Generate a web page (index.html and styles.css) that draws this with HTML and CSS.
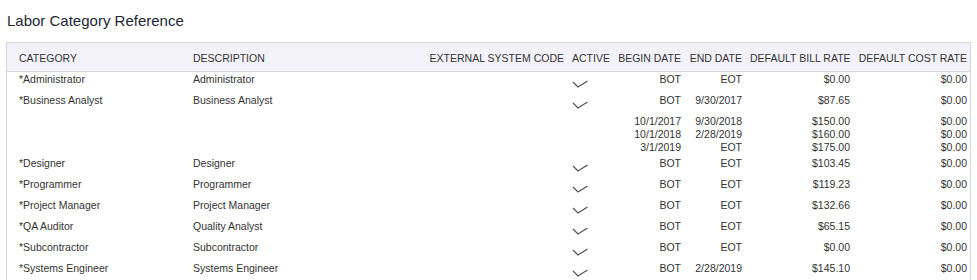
FILE: index.html
```html
<!DOCTYPE html>
<html>
<head>
<meta charset="utf-8">
<link rel="stylesheet" href="styles.css">
</head>
<body>
<h1 class="title">Labor Category Reference</h1>
<div class="table">
  <div class="row head">
    <div class="c first">CATEGORY</div>
    <div class="c">DESCRIPTION</div>
    <div class="c num">EXTERNAL SYSTEM CODE</div>
    <div class="c">ACTIVE</div>
    <div class="c num">BEGIN DATE</div>
    <div class="c num">END DATE</div>
    <div class="c num">DEFAULT BILL RATE</div>
    <div class="c num last">DEFAULT COST RATE</div>
  </div>

  <div class="row main">
    <div class="c first">*Administrator</div><div class="c">Administrator</div><div class="c"></div>
    <div class="c"><svg class="check" viewBox="0 0 16 8"><path d="M1 2 L6 7 L15.5 1"/></svg></div>
    <div class="c num">BOT</div><div class="c num">EOT</div><div class="c num">$0.00</div><div class="c num last">$0.00</div>
  </div>
  <div class="row main">
    <div class="c first">*Business Analyst</div><div class="c">Business Analyst</div><div class="c"></div>
    <div class="c"><svg class="check" viewBox="0 0 16 8"><path d="M1 2 L6 7 L15.5 1"/></svg></div>
    <div class="c num">BOT</div><div class="c num">9/30/2017</div><div class="c num">$87.65</div><div class="c num last">$0.00</div>
  </div>
  <div class="subs">
    <div class="row sub">
      <div class="c first"></div><div class="c"></div><div class="c"></div><div class="c"></div>
      <div class="c num">10/1/2017</div><div class="c num">9/30/2018</div><div class="c num">$150.00</div><div class="c num last">$0.00</div>
    </div>
    <div class="row sub">
      <div class="c first"></div><div class="c"></div><div class="c"></div><div class="c"></div>
      <div class="c num">10/1/2018</div><div class="c num">2/28/2019</div><div class="c num">$160.00</div><div class="c num last">$0.00</div>
    </div>
    <div class="row sub">
      <div class="c first"></div><div class="c"></div><div class="c"></div><div class="c"></div>
      <div class="c num">3/1/2019</div><div class="c num">EOT</div><div class="c num">$175.00</div><div class="c num last">$0.00</div>
    </div>
  </div>
  <div class="row main">
    <div class="c first">*Designer</div><div class="c">Designer</div><div class="c"></div>
    <div class="c"><svg class="check" viewBox="0 0 16 8"><path d="M1 2 L6 7 L15.5 1"/></svg></div>
    <div class="c num">BOT</div><div class="c num">EOT</div><div class="c num">$103.45</div><div class="c num last">$0.00</div>
  </div>
  <div class="row main">
    <div class="c first">*Programmer</div><div class="c">Programmer</div><div class="c"></div>
    <div class="c"><svg class="check" viewBox="0 0 16 8"><path d="M1 2 L6 7 L15.5 1"/></svg></div>
    <div class="c num">BOT</div><div class="c num">EOT</div><div class="c num">$119.23</div><div class="c num last">$0.00</div>
  </div>
  <div class="row main">
    <div class="c first">*Project Manager</div><div class="c">Project Manager</div><div class="c"></div>
    <div class="c"><svg class="check" viewBox="0 0 16 8"><path d="M1 2 L6 7 L15.5 1"/></svg></div>
    <div class="c num">BOT</div><div class="c num">EOT</div><div class="c num">$132.66</div><div class="c num last">$0.00</div>
  </div>
  <div class="row main">
    <div class="c first">*QA Auditor</div><div class="c">Quality Analyst</div><div class="c"></div>
    <div class="c"><svg class="check" viewBox="0 0 16 8"><path d="M1 2 L6 7 L15.5 1"/></svg></div>
    <div class="c num">BOT</div><div class="c num">EOT</div><div class="c num">$65.15</div><div class="c num last">$0.00</div>
  </div>
  <div class="row main">
    <div class="c first">*Subcontractor</div><div class="c">Subcontractor</div><div class="c"></div>
    <div class="c"><svg class="check" viewBox="0 0 16 8"><path d="M1 2 L6 7 L15.5 1"/></svg></div>
    <div class="c num">BOT</div><div class="c num">EOT</div><div class="c num">$0.00</div><div class="c num last">$0.00</div>
  </div>
  <div class="row main">
    <div class="c first">*Systems Engineer</div><div class="c">Systems Engineer</div><div class="c"></div>
    <div class="c"><svg class="check" viewBox="0 0 16 8"><path d="M1 2 L6 7 L15.5 1"/></svg></div>
    <div class="c num">BOT</div><div class="c num">2/28/2019</div><div class="c num">$145.10</div><div class="c num last">$0.00</div>
  </div>
</div>
</body>
</html>
```
FILE: styles.css
```css
html, body {
  margin: 0;
  background: #ffffff;
}
body {
  padding: 0 6px;
  font-family: "Liberation Sans", Arial, sans-serif;
  color: #333333;
  overflow: hidden;
}
.title {
  margin: 12px 0 12px 1px;
  font-size: 15px;
  font-weight: normal;
  line-height: 18px;
  color: #1f2636;
}
.table {
  width: 963px;
  border: 1px solid #d6d6d6;
  border-bottom: none;
  font-size: 10.5px;
}
.row {
  display: grid;
  grid-template-columns: 182px 236px 143px 46px 71px 61px 108px 116px;
}
.head {
  background: #f3f2fa;
  border-bottom: 1px solid #d6d6d6;
  padding-top: 3px;
  line-height: 25px;
  color: #333333;
  white-space: nowrap;
}
.main {
  height: 21px;
  line-height: 15px;
}
.subs {
  padding: 1px 0 2px;
}
.sub {
  height: 13px;
  line-height: 13px;
}
.c {
  padding: 0 4px;
  white-space: nowrap;
}
.c.first {
  padding-left: 12px;
}
.c.num {
  text-align: right;
}
.c.last {
  padding-right: 3px;
}
.check {
  display: block;
  width: 16px;
  height: 8px;
  margin-top: 8px;
  fill: none;
  stroke: #555555;
  stroke-width: 1.3;
}
```
